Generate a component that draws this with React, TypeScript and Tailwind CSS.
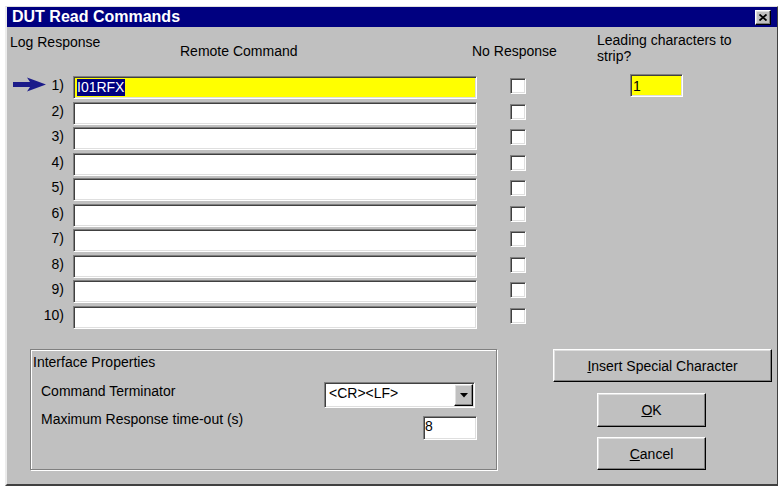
const sunken =
  "border border-t-[#808080] border-l-[#808080] border-b-white border-r-white shadow-[inset_1px_1px_0_#404040,inset_-1px_-1px_0_#dfdfdf]";
const raised =
  "border border-t-white border-l-white border-b-black border-r-black shadow-[inset_-1px_-1px_0_#808080,inset_1px_1px_0_#dfdfdf]";

function Arrow() {
  return (
    <svg width="33" height="15" viewBox="0 0 33 15" className="ml-[6px] block">
      <path d="M0 5 H17 L14 0.5 L33 7.5 L14 14.5 L17 10 H0 Z" fill="#1c1c8a" />
    </svg>
  );
}

export default function App() {
  const rows = [1, 2, 3, 4, 5, 6, 7, 8, 9, 10];
  return (
    <div className="w-[781px] h-[489px] bg-white pt-[6px] pl-[5px] pr-[3px] pb-[3px] font-['Liberation_Sans',Arial,sans-serif] text-[14px] leading-4 text-black">
      <div className="h-full flex flex-col bg-[#c0c0c0] border-l-2 border-l-[#ececec] border-t border-t-[#dfdfdf] border-r border-r-[#404040] border-b-2 border-b-[#404040]">
        {/* Title bar */}
        <div className="h-[20px] shrink-0 bg-[#000080] flex items-center justify-between pl-[5px] pr-[6px]">
          <span className="text-white font-bold text-[16px] leading-5">DUT Read Commands</span>
          <div className={`w-[16px] h-[15px] bg-[#c0c0c0] flex items-center justify-center ${raised}`}>
            <svg width="8" height="7" viewBox="0 0 8 7">
              <path d="M0.5 0.5 L7.5 6.5 M7.5 0.5 L0.5 6.5" stroke="#000" strokeWidth="1.8" />
            </svg>
          </div>
        </div>

        {/* Header */}
        <div className="h-[49px] shrink-0 flex items-start whitespace-nowrap">
          <div className="ml-[3px] w-[170px] pt-[7px]">Log Response</div>
          <div className="w-[292px] pt-[16px]">Remote Command</div>
          <div className="w-[125px] pt-[16px]">No Response</div>
          <div className="pt-[5px] leading-[16px]">
            <div>Leading characters to</div>
            <div>strip?</div>
          </div>
        </div>

        {/* Rows */}
        <div className="flex flex-col gap-[2.5px]">
          {rows.map((i) => (
            <div key={i} className="h-[23px] flex items-start">
              <div className="w-[57px] flex justify-between items-start pt-[1px]">
                {i === 1 ? <Arrow /> : <span />}
                <span>{i})</span>
              </div>
              <div
                className={`ml-[9px] w-[404px] h-[23px] ${sunken} ${i === 1 ? "bg-[#ffff00]" : "bg-white"} flex items-center pl-[3px]`}
              >
                {i === 1 && (
                  <span className="bg-[#000080] text-white h-[17px] leading-[17px] pr-[1px]">I01RFX</span>
                )}
              </div>
              <div className={`ml-[33px] mt-[2px] w-[16px] h-[16px] bg-white ${sunken}`} />
              {i === 1 && (
                <div className={`ml-[104px] -mt-[2px] w-[53px] h-[23px] bg-[#ffff00] ${sunken} pl-[2px] pt-[3px]`}>
                  1
                </div>
              )}
            </div>
          ))}
        </div>

        {/* Bottom */}
        <div className="mt-[20.5px] flex items-start">
          <div className="ml-[23px] w-[467px] h-[121px] border border-[#808080] shadow-[inset_1px_1px_0_#fff,1px_1px_0_#fff] pl-[2px] pt-[4px]">
            <div>Interface Properties</div>
            <div className="mt-[12px] flex items-start">
              <div className="pl-[8px] w-[291px] mt-[1px]">Command Terminator</div>
              <div className={`w-[151px] h-[26px] bg-white ${sunken} flex items-start justify-between p-[1px]`}>
                <span className="pl-[3px] pt-[1px]">&lt;CR&gt;&lt;LF&gt;</span>
                <div className={`w-[19px] h-[22px] bg-[#c0c0c0] ${raised} flex items-center justify-center`}>
                  <svg width="8" height="5" viewBox="0 0 8 5">
                    <path d="M0 0 H8 L4 4.5 Z" fill="#000" />
                  </svg>
                </div>
              </div>
            </div>
            <div className="mt-[8px] flex items-start">
              <div className="pl-[8px] w-[390px] -mt-[5px] whitespace-nowrap">Maximum Response time-out (s)</div>
              <div className={`w-[54px] h-[24px] bg-white ${sunken} pl-[1px] pt-[1px]`}>8</div>
            </div>
          </div>

          <div className="ml-[56px] flex flex-col">
            <div className={`w-[219px] h-[33px] ${raised} flex items-center justify-center`}>
              <span>
                <span className="underline">I</span>nsert Special Character
              </span>
            </div>
            <div className={`mt-[11px] ml-[44px] w-[109px] h-[34px] ${raised} flex items-center justify-center`}>
              <span>
                <span className="underline">O</span>K
              </span>
            </div>
            <div className={`mt-[10px] ml-[44px] w-[109px] h-[33px] ${raised} flex items-center justify-center`}>
              <span>
                <span className="underline">C</span>ancel
              </span>
            </div>
          </div>
        </div>
      </div>
    </div>
  );
}
